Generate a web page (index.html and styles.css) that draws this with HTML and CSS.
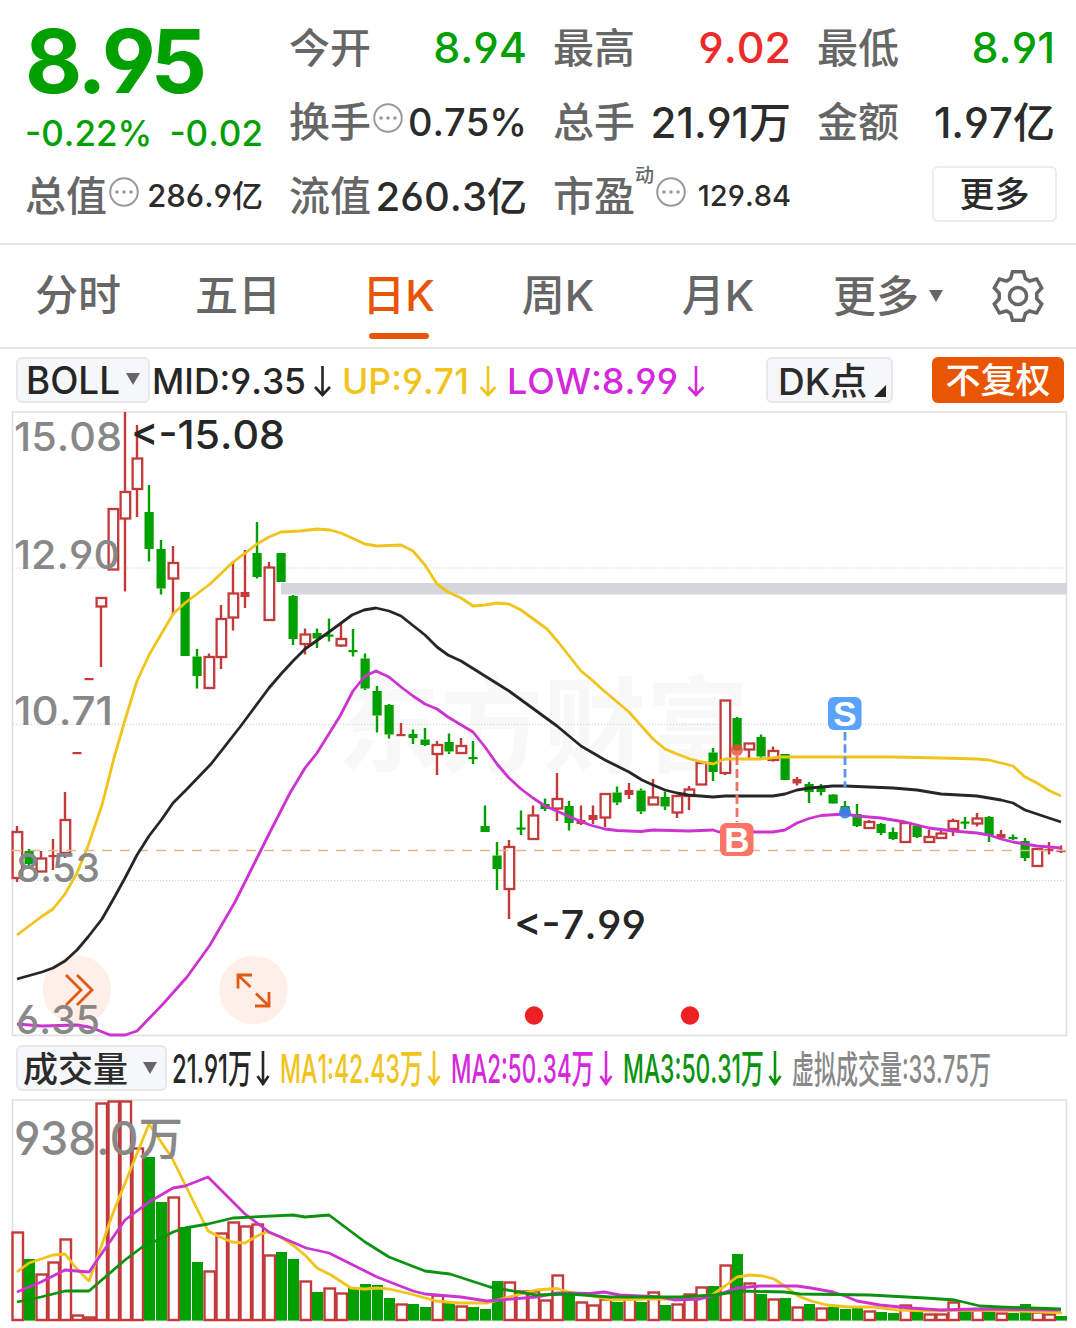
FILE: index.html
```html
<!DOCTYPE html>
<html lang="zh-CN">
<head>
    <meta charset="UTF-8">
    <meta name="viewport" content="width=device-width, initial-scale=1.0">
    <title>日K</title>
    <link rel="stylesheet" href="styles.css">
</head>
<body>
    <div class="quote">
        <div class="price-box">
            <div class="price">8.95</div>
            <div class="change"><span>-0.22%</span><span>-0.02</span></div>
        </div>
        <div class="cell"><label>今开</label><span class="num down">8.94</span></div>
        <div class="cell"><label>最高</label><span class="num up">9.02</span></div>
        <div class="cell"><label>最低</label><span class="num down">8.91</span></div>
        <div class="cell">
            <label>换手</label>
            <svg class="info" viewBox="0 0 30 30"><circle cx="15" cy="15" r="13.8"/><path d="M8 15h.01M15 15h.01M22 15h.01"/></svg>
            <span class="num size-m">0.75%</span>
        </div>
        <div class="cell"><label>总手</label><span class="num size-l">21.91万</span></div>
        <div class="cell"><label>金额</label><span class="num size-l">1.97亿</span></div>
        <div class="cell">
            <label>总值</label>
            <svg class="info" viewBox="0 0 30 30"><circle cx="15" cy="15" r="13.8"/><path d="M8 15h.01M15 15h.01M22 15h.01"/></svg>
            <span class="num size-s">286.9亿</span>
        </div>
        <div class="cell"><label>流值</label><span class="num size-ml">260.3亿</span></div>
        <div class="cell">
            <label>市盈</label><sup>动</sup>
            <svg class="info" viewBox="0 0 30 30"><circle cx="15" cy="15" r="13.8"/><path d="M8 15h.01M15 15h.01M22 15h.01"/></svg>
            <span class="num size-xs">129.84</span>
        </div>
        <div class="cell right"><button class="more">更多</button></div>
    </div>

    <div class="tabs">
        <div class="tab">分时</div>
        <div class="tab">五日</div>
        <div class="tab active">日K</div>
        <div class="tab">周K</div>
        <div class="tab">月K</div>
        <div class="tab-more">更多<i class="caret"></i></div>
        <svg class="gear" viewBox="-27 -27 54 54">
            <path d="M-5.5 -24.2H5.5L7.4 -17.4L11.4 -15L18.6 -17L23.7 -8L18.8 -2.8V2.8L23.7 8L18.6 17L11.4 15L7.4 17.4L5.5 24.2H-5.5L-7.4 17.4L-11.4 15L-18.6 17L-23.7 8L-18.8 2.8V-2.8L-23.7 -8L-18.6 -17L-11.4 -15L-7.4 -17.4Z"/>
            <circle r="8.6"/>
        </svg>
    </div>

    <div class="bar">
        <button class="pick boll">
            <svg width="94" height="40" id="bollName"></svg>
            <i class="caret"></i>
        </button>
        <svg class="legend" width="560" height="50" id="bollLegend"></svg>
        <button class="pick dk"><span>DK点</span><i class="corner"></i></button>
        <button class="adjust">不复权</button>
    </div>

    <svg class="kline" id="kline" viewBox="0 411 1076 626"></svg>

    <div class="bar vol-bar">
        <button class="pick vol"><span>成交量</span><i class="caret"></i></button>
        <svg class="legend" width="830" height="56" id="volLegend"></svg>
    </div>

    <svg class="volume" id="volume" viewBox="0 1099 1076 223"></svg>

    <script>
        const RED = "#c43a3a", GREEN = "#00a000";
        const GOLD = "#f0c41b", BLACK = "#262626", PINK = "#cc33d0", DGREEN = "#0b930f";
        const STEP = 12, X0 = 17;

        // color, high, body top, body bottom, low
        const candles = [
            ["r",826,832,878,882],["g",849,851,864,869],["r",851,858.5,871.5,872],["r",839,856,856,870],
            ["r",792,820,853,858],["r",753,753,753,753],["r",679,679,679,679],["r",598,598,606.5,667],
            ["r",509,509,569.5,570],["r",412,492,518.5,591.5],["r",425,458.5,489,517],["g",485,512,549,561.5],
            ["g",540,549,588.5,594.5],["r",546,563,578.5,615],["g",592,592,656,656],["g",649,656.5,676,688.5],
            ["r",653.5,657,688,688],["r",605,619,657,669],["r",561.5,593.5,617.5,630.5],["r",550,593,596,608],
            ["g",522,553,577,578.5],["r",562,567.5,620,620],["g",553,553,582,582],["g",595,596,639,645],
            ["r",628.5,634.5,644,654.5],["g",628.5,633,638.5,648],["g",618.5,635.5,635.5,641.5],["r",623,639,645.5,647],
            ["g",629,651,651,656.5],["g",653.5,658.5,688.5,690],["g",686,691,715.5,732.5],["g",704,705,734.5,738.5],
            ["r",723,735,735,735],["g",729.5,735,737,744],["g",728,739.5,745,746],["r",741,745,754,775],
            ["g",733.5,742,751.5,754],["r",738,746,753,753],["g",741,758,758,764],["g",805.5,826,832,832],
            ["g",842,855.5,869,890],["r",840,847,889,919],["g",810.5,828.5,828.5,835],["r",805.5,815.5,839,839],
            ["g",798.5,804,809,811],["r",773,799,808.5,821],["g",801,806,823,830.5],["r",805.5,821,823,825],
            ["r",805.5,816,819,824],["r",793,794,817.5,827],["g",786.5,792.5,802.5,805],["r",783,791,794,799],
            ["g",788.5,790.5,811.5,814],["r",779,797.5,804.5,805],["g",791.5,797,806.5,810],["r",795,796,812.5,818],
            ["r",786,789.5,796,810],["r",763,763,784.5,784],["g",748,752.5,772,781],["r",700,700.5,773,775],
            ["g",717,718,750,751],["r",743,743.5,749.5,758],["g",734.5,737,756.5,758],["r",746.5,751,760,761.5],
            ["g",754,754,780,780],["r",777,780,782.5,785.5],["g",782,784,792,803],["g",784,787,791,795.5],
            ["g",794,794.5,803.5,804],["g",801,806,815,815],["g",804,814,826,827],["r",820,822,828,828],
            ["g",823,824,833,835],["g",827.5,832,839,840],["r",823,823,842,842],["g",825,825.5,837,838],
            ["r",829.5,837,842,843],["r",831,833.5,838,838],["r",818.5,821,829,836],["g",817,822.5,822.5,829],
            ["r",813,818.5,823.5,826.5],["g",816,817,835.5,842],["r",830,835,837,838],["g",834.5,838,838,840],
            ["g",838,841,858,861],["r",849,849,866,866],["r",842,850,850,854.5],["r",845.5,851,851,853]
        ];

        // top of each volume bar
        const volumes = [
            1232,1259,1274,1262,1239,1315,1317,1103,1101,1101,1148,1157,1202,1197,1227,1262,1271,1233,1222,1226,
            1224,1255,1252,1259,1281,1292,1288,1293,1288,1284,1285,1298,1304,1304,1307,1295,1303,1306,1307,1309,
            1281,1282,1291,1291,1300,1275,1295,1302,1305,1299,1302,1296,1302,1292,1305,1304,1294,1287,1286,1265,
            1254,1283,1294,1299,1298,1307,1304,1308,1307,1309,1306,1311,1312,1313,1305,1311,1314,1314,1302,1311,
            1310,1310,1313,1313,1304,1312,1314,1316
        ];
        // days that fell during the session but closed above the day before
        const hollowDays = [20, 26, 42, 44, 67];

        const upLine = "17,935 41,917 53,909 65,894 77,873 88,846 102,805 114,758 125,720 137,681 149,655 173,614 185,603 210,584 232,563 257,544 269,537 281,532 300,531 317,529 330,530 341,533 365,544 377,546 401,545 413,551 425,565 437,584 448,592 461,598 473,606 485,605 497,603 509,604 521,610 547,629 559,643 581,671 592,680 603,690 629,712 653,739 665,749 677,754 690,759 702,762 713,764 725,759 760,759 780,757 845,757 893,757 940,758 977,759 989,760 1001,763 1013,766 1025,777 1037,783 1050,791 1061,796";
        const midLine = "17,979 42,972 53,968 65,961 77,950 88,937 102,919 114,898 125,878 137,855 149,836 162,819 173,803 187,789 211,764 240,727 269,688 281,674 293,661 305,649 329,632 352,615 364,610 376,608 389,611 401,616 425,635 437,647 448,655 461,661 509,691 557,726 581,746 605,760 629,772 642,780 653,785 665,790 677,793 688,795 713,797 725,796 773,796 785,794 797,790 810,788 833,786 845,786 869,787 893,788 917,790 941,794 977,796 989,798 1001,800 1013,803 1025,810 1043,816 1061,822";
        const lowLine = "17,1024 42,1026 77,1025 89,1027 100,1031 110,1035 125,1035 137,1031 163,1004 187,977 210,945 235,902 270,832 290,793 305,768 317,753 340,716 353,691 365,676 376,671 389,677 401,687 413,696 425,704 437,709 448,717 473,732 485,747 497,764 509,778 521,789 533,798 545,806 559,812 570,817 590,825 605,829 617,830.5 641,831.5 653,830 689,831 713,830 719,832 773,832 785,830 797,823 809,818.5 821,815.5 845,814 857,816 881,818 905,822 929,828 953,831 977,833 989,835 1001,839 1013,842 1037,846 1061,848";

        const ma1 = "17,1272 29,1263 41,1259 53,1255 65,1254 77,1269 89,1281 113,1213 149,1124 172,1158 208,1231 220,1237 232,1242 245,1243 257,1236 267,1232 281,1237 294,1246 306,1256 317,1268 331,1275 351,1288 365,1289 377,1288 389,1289 411,1294 436,1301 458,1303 487,1303 513,1296 536,1290 557,1288.5 569,1292 581,1294 612,1300 646,1299 674,1299 712,1295 725,1286 737,1277 750,1275 763,1276 774,1279 786,1287 798,1296 811,1301 827,1305 848,1307 873,1307 898,1310 932,1311 966,1310 1018,1311 1049,1312 1062,1313";
        const ma2 = "17,1292 41,1282 65,1270 89,1272 125,1220 149,1202 173,1188 185,1186 208,1177 245,1214 269,1232 306,1248 329,1253 377,1277 413,1291 425,1294 461,1297 487,1301 500,1300 536,1297 557,1293 590,1293.5 604,1292 620,1295 660,1297 674,1300 700,1299 720,1294 737,1288 760,1286 797,1286 811,1288 833,1292 845,1296 857,1301 880,1305 910,1308 941,1310 975,1309 1061,1310";
        const ma3 = "17,1302 41,1297 65,1291 89,1291 125,1260 149,1242 156,1241 173,1232 185,1228 208,1224 233,1218 293,1215 305,1217 329,1215 365,1242 389,1257 425,1271 450,1274 490,1287 536,1295 570,1294 610,1297 680,1297 715,1295 740,1291 785,1292 800,1294 870,1295 925,1298 955,1300 980,1306 1000,1307 1061,1309";

        function rect(x, y, w, h, attrs) {
            return `<rect x="${x}" y="${y}" width="${w}" height="${h}" ${attrs}/>`;
        }
        function line(points, color) {
            return `<polyline points="${points}" fill="none" stroke="${color}" stroke-width="2.8" stroke-linejoin="round"/>`;
        }
        function label(x, y, size, width, text, color) {
            return `<text data-x="${x}" data-y="${y}" data-width="${width}" font-size="${size}" fill="${color}">${text.replace("<", "&lt;")}</text>`;
        }
        function arrow(x, top, bottom, half, color) {
            return `<path d="M${x} ${top}V${bottom}M${x - half} ${bottom - 9}L${x} ${bottom - 1}L${x + half} ${bottom - 9}" fill="none" stroke="${color}" stroke-width="2.6"/>`;
        }

        // squeeze or stretch every label to its column width
        function fitLabels() {
            document.querySelectorAll("text[data-width]").forEach(t => {
                const scale = t.dataset.width / t.getComputedTextLength();
                t.setAttribute("transform", `translate(${t.dataset.x} ${t.dataset.y}) scale(${scale} 1)`);
            });
        }

        function drawCandle(c, i) {
            const [type, high, top, bottom, low] = c;
            const x = X0 + i * STEP;
            const color = type === "r" ? RED : GREEN;
            let out = "";
            if (high < top) out += rect(x - 1.2, high, 2.4, top - high, `fill="${color}"`);
            if (low > bottom) out += rect(x - 1.2, bottom, 2.4, low - bottom, `fill="${color}"`);
            if (bottom - top < 4.5) {
                out += rect(x - 4.5, top - 1, 9, Math.max(2.2, bottom - top + 2), `fill="${color}"`);
            } else if (type === "r") {
                out += rect(x - 4.4, top, 9.6, bottom - top, `fill="#fff" stroke="${RED}" stroke-width="2.3"`);
            } else {
                out += rect(x - 4.5, top, 9.2, bottom - top, `fill="${GREEN}"`);
            }
            return out;
        }

        function drawKline() {
            let s = `<text class="mark" data-x="337" data-y="764" data-width="412" font-size="103">东方财富</text>`;
            s += rect(12.5, 412, 1054, 623.5, `fill="none" stroke="#dfdfdf" stroke-width="1.5"`);
            [568, 724.3, 880.5].forEach(y => {
                s += `<path d="M13 ${y}H1066" stroke="#d2d2d2" stroke-dasharray="1.2 1.8"/>`;
            });
            s += rect(281, 583, 786, 11.5, `fill="#d3d7db"`);
            s += candles.map(drawCandle).join("");
            s += `<path d="M12 850.5H1066" stroke="#e3b78c" stroke-width="1.4" stroke-dasharray="10 8"/>`;
            s += `<circle cx="77" cy="990" r="34.3" fill="#ffefe8"/><circle cx="253.5" cy="990" r="34.3" fill="#ffefe8"/>`;
            s += line(upLine, GOLD) + line(midLine, BLACK) + line(lowLine, PINK);
            s += `<path d="M66 975L81 990L66 1005M77 975L92 990L77 1005M252 975H238V988.5M238 975L250.5 987M255 1006H269V992M269 1006L256 993.5" fill="none" stroke="#df5a12" stroke-width="2.8"/>`;

            // price scale
            s += label(14, 451, 40, 108, "15.08", "#888");
            s += label(14, 569, 40, 106, "12.90", "#888");
            s += label(14, 725, 40, 99, "10.71", "#888");
            s += label(16, 882, 40, 84, "8.53", "#888");
            s += label(16, 1034, 40, 84, "6.35", "#888");
            s += label(131, 449, 40, 154, "<-15.08", "#262626");
            s += label(514, 939, 40, 132, "<-7.99", "#262626");

            // buy / sell points
            s += `<path d="M737 753V822" stroke="#ef7365" stroke-width="2.8" stroke-dasharray="9 4" stroke-dashoffset="-3"/>`;
            s += `<path d="M845 732V788" stroke="#5796e8" stroke-width="2.8" stroke-dasharray="8.5 3.8"/>`;
            s += `<circle cx="737" cy="750" r="6" fill="#ee4c35" opacity=".8"/><circle cx="845" cy="812.5" r="6" fill="#3b80e8" opacity=".9"/>`;
            s += rect(720, 823, 33.5, 33, `rx="6" fill="#fb7466"`) + rect(828, 697, 33.5, 33, `rx="6" fill="#5ba2fa"`);
            s += `<text class="point" x="737" y="852">B</text><text class="point" x="845" y="726">S</text>`;
            s += `<circle cx="534" cy="1015.5" r="9.2" fill="#ee2024"/><circle cx="690" cy="1015.5" r="9.2" fill="#ee2024"/>`;
            document.getElementById("kline").innerHTML = s;
        }

        function drawVolume() {
            let s = rect(12.5, 1100, 1054, 220.5, `fill="none" stroke="#dfdfdf" stroke-width="1.5"`);
            volumes.forEach((top, i) => {
                const x = X0 + i * STEP;
                if (i === 87 || candles[i][0] === "g" && !hollowDays.includes(i)) {
                    s += rect(x - 5, top, 11, 1320.5 - top, `fill="${GREEN}"`);
                } else {
                    s += rect(x - 4.5, top + .5, 10.5, 1319.5 - top, `fill="#fff" stroke="${RED}" stroke-width="2.4"`);
                }
            });
            s += line(ma1, GOLD) + line(ma2, PINK) + line(ma3, DGREEN);
            s += label(14, 1155, 46, 169, "938.0万", "#888");
            document.getElementById("volume").innerHTML = s;
        }

        function drawLegends() {
            document.getElementById("bollName").innerHTML = label(0, 34, 38, 94, "BOLL", BLACK);
            document.getElementById("bollLegend").innerHTML =
                label(2, 39, 36, 154, "MID:9.35", BLACK) + arrow(172.5, 11, 41, 7.5, BLACK) +
                label(192, 39, 36, 127, "UP:9.71", GOLD) + arrow(338, 11, 41, 7.5, GOLD) +
                label(357, 39, 36, 171, "LOW:8.99", "#d528dc") + arrow(546, 11, 41, 7.5, "#d528dc");
            document.getElementById("volLegend").innerHTML =
                label(5, 43, 40, 80, "21.91万", BLACK) + arrow(96, 11, 45, 5.5, BLACK) +
                label(113, 43, 40, 143, "MA1:42.43万", GOLD) + arrow(267, 11, 45, 5.5, GOLD) +
                label(284, 43, 40, 143, "MA2:50.34万", "#d528dc") + arrow(439, 11, 45, 5.5, "#d528dc") +
                label(456, 43, 40, 141, "MA3:50.31万", DGREEN) + arrow(608, 11, 45, 5.5, DGREEN) +
                label(625, 43, 38, 199, "虚拟成交量:33.75万", "#888");
        }

        drawKline();
        drawVolume();
        drawLegends();
        fitLabels();
    </script>
</body>
</html>
```
FILE: styles.css
```css
* {
    box-sizing: border-box;
}
body {
    margin: 0;
    width: 1076px;
    height: 1328px;
    overflow: hidden;
    background-color: #fff;
    font-family: Inter, "Noto Sans CJK SC", sans-serif;
    font-weight: 500;
    font-feature-settings: "cv03", "cv04";
    font-kerning: none;
    color: #2b2b2b;
}
svg {
    display: block;
    flex: none;
    overflow: visible;
}
button {
    font: inherit;
    font-kerning: none;
    color: inherit;
    padding: 0;
}

/* quote header */
.quote {
    display: grid;
    grid-template-columns: repeat(4, 238px);
    grid-template-rows: repeat(3, 74px);
    column-gap: 26px;
    height: 245px;
    padding: 10px 0 0 25px;
    border-bottom: 2px solid #e4e4e4;
}
.price-box {
    grid-row: span 2;
    color: #00a000;
    white-space: nowrap;
}
.price {
    font-size: 88px;
    line-height: 102px;
    font-weight: 700;
    letter-spacing: -5px;
}
.change {
    display: flex;
    justify-content: space-between;
    font-size: 35px;
    line-height: 42px;
}
.cell {
    display: flex;
    align-items: center;
    white-space: nowrap;
}
.cell label {
    margin-top: -5px;
    font-size: 41px;
    color: #666;
}
.cell sup {
    align-self: flex-start;
    margin-top: 4px;
    font-size: 19px;
    line-height: 28px;
    color: #666;
}
.info {
    width: 30px;
    height: 30px;
    margin: -6px 0 0 2px;
    fill: none;
    stroke: #999;
    stroke-width: 2;
}
.info path {
    stroke-width: 3.6;
    stroke-linecap: round;
}
.num {
    margin-left: auto;
    font-size: 43px;
}
.size-l {
    margin-top: -4px;
    font-size: 42px;
}
.size-ml {
    margin-top: -3px;
    font-size: 40px;
}
.size-m {
    margin-top: 2px;
    font-size: 38px;
}
.size-s {
    margin-top: -3px;
    font-size: 31px;
}
.size-xs {
    font-size: 29px;
}
.up {
    color: #ee2a2a;
}
.down {
    color: #00a000;
}
.right {
    justify-content: flex-end;
}
.more {
    width: 125px;
    height: 56px;
    margin: -2px -2px 0 0;
    border: 2px solid #ececee;
    border-radius: 6px;
    background: #fff;
    font-size: 35px;
    line-height: 50px;
}

/* period tabs */
.tabs {
    display: flex;
    align-items: center;
    height: 104px;
    border-bottom: 2px solid #e4e4e4;
    font-size: 43px;
    line-height: 100px;
    color: #666;
}
.tab {
    width: 160px;
    height: 102px;
    padding-right: 4px;
    text-align: center;
}
.tab.active {
    padding-right: 3px;
    color: #e85506;
}
.tab.active::after {
    content: "";
    display: block;
    width: 60px;
    height: 6px;
    margin: -12px auto 0;
    border-radius: 3px;
    background: #e85506;
}
.tab-more {
    display: flex;
    align-items: center;
    width: 190px;
    padding-left: 33px;
}
.caret {
    border: 7.5px solid transparent;
    border-top: 12px solid #666;
    border-bottom: 0;
}
.tab-more .caret {
    margin: 0 0 0 10px;
}
.gear {
    width: 54px;
    height: 54px;
    margin-left: 1px;
    fill: none;
    stroke: #666;
    stroke-width: 3.5;
}

/* indicator rows */
.bar {
    display: flex;
    align-items: center;
    height: 62px;
    padding-left: 16px;
}
.pick {
    display: flex;
    align-items: center;
    height: 46px;
    border: 2px solid #e6e8eb;
    border-radius: 6px;
    background: #f6f7f9;
    white-space: nowrap;
}
.pick span {
    margin-top: -3px;
}
.boll {
    width: 134px;
    padding-left: 8px;
}
.boll .caret {
    margin: -3px 0 0 6px;
}
.dk {
    position: relative;
    width: 127px;
    margin-left: 56px;
    padding-left: 10px;
    font-size: 37px;
}
.corner {
    position: absolute;
    right: 5px;
    bottom: 4px;
    border-left: 12px solid transparent;
    border-bottom: 12px solid #262626;
}
.adjust {
    width: 132px;
    height: 46px;
    margin-left: 39px;
    border: 0;
    border-radius: 6px;
    background: #ea5504;
    color: #fff;
    font-size: 35px;
    line-height: 44px;
}
.vol {
    width: 151px;
    padding-left: 5px;
    font-size: 35px;
}
.vol .caret {
    margin: 0 0 0 15px;
}

/* charts */
.kline {
    width: 1076px;
    height: 626px;
}
.volume {
    width: 1076px;
    height: 223px;
}
.mark {
    fill: #f8f8f8;
    font-weight: 700;
}
.point {
    fill: #fff;
    font-family: "Liberation Sans", Arial, sans-serif;
    font-size: 35px;
    font-weight: 700;
    text-anchor: middle;
}
```
